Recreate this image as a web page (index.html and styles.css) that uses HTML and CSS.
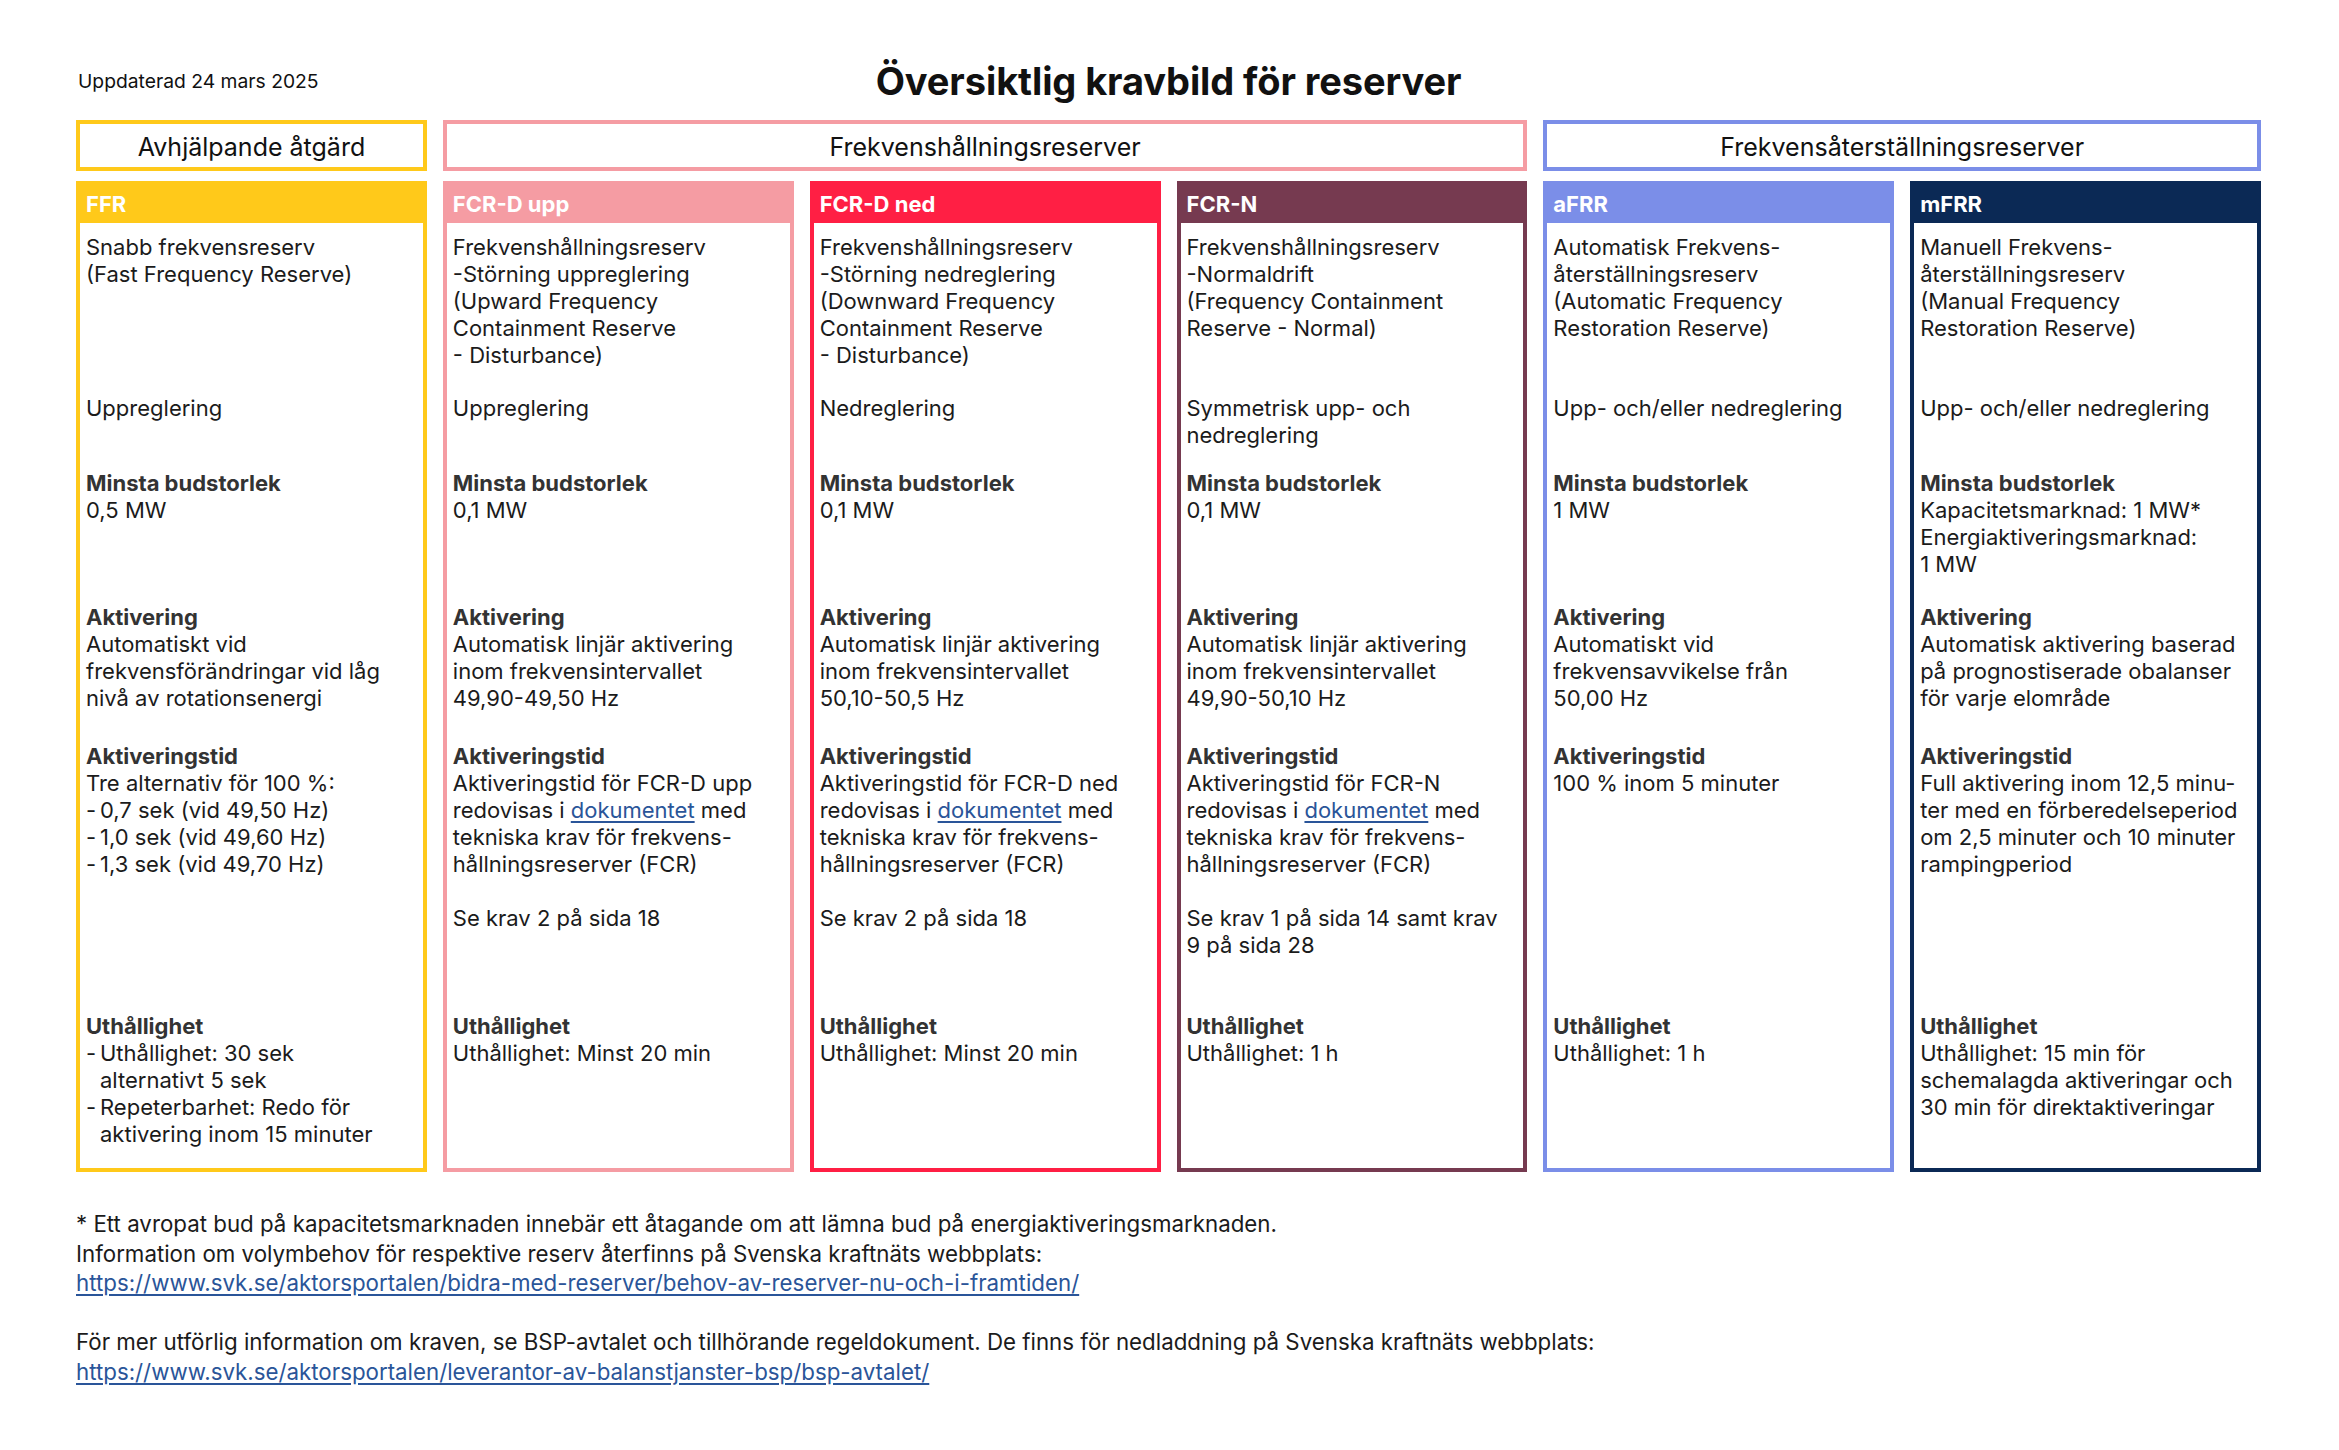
FILE: index.html
```html
<!DOCTYPE html>
<html lang="sv">
<head>
<meta charset="utf-8">
<title>Översiktlig kravbild för reserver</title>
<link rel="stylesheet" href="styles.css">
</head>
<body>
<div class="page">
  <header class="top">
    <div class="updated">Uppdaterad 24 mars 2025</div>
    <h1 class="title">Översiktlig kravbild för reserver</h1>
    <div></div>
  </header>

  <div class="groups">
    <div class="group g-yellow">Avhjälpande åtgärd</div>
    <div class="group g-pink span3">Frekvenshållningsreserver</div>
    <div class="group g-blue span2">Frekvensåterställningsreserver</div>
  </div>

  <div class="cols">
    <section class="col c-ffr">
      <div class="head">FFR</div>
      <div class="body">
        <div class="s desc">Snabb frekvensreserv<br>(Fast Frequency Reserve)</div>
        <div class="s dir">Uppreglering</div>
        <div class="s bud"><b>Minsta budstorlek</b><br>0,5 MW</div>
        <div class="s akt"><b>Aktivering</b><br>Automatiskt vid<br>frekvensförändringar vid låg<br>nivå av rotationsenergi</div>
        <div class="s tid"><b>Aktiveringstid</b><br>Tre alternativ för 100 %:
          <ul class="dash">
            <li>0,7 sek (vid 49,50 Hz)</li>
            <li>1,0 sek (vid 49,60 Hz)</li>
            <li>1,3 sek (vid 49,70 Hz)</li>
          </ul>
        </div>
        <div class="s uth"><b>Uthållighet</b>
          <ul class="dash">
            <li>Uthållighet: 30 sek<br>alternativt 5 sek</li>
            <li>Repeterbarhet: Redo för<br>aktivering inom 15 minuter</li>
          </ul>
        </div>
      </div>
    </section>

    <section class="col c-fcrdu">
      <div class="head">FCR-D upp</div>
      <div class="body">
        <div class="s desc">Frekvenshållningsreserv<br>-Störning uppreglering<br>(Upward Frequency<br>Containment Reserve<br>- Disturbance)</div>
        <div class="s dir">Uppreglering</div>
        <div class="s bud"><b>Minsta budstorlek</b><br>0,1 MW</div>
        <div class="s akt"><b>Aktivering</b><br>Automatisk linjär aktivering<br>inom frekvensintervallet<br>49,90-49,50 Hz</div>
        <div class="s tid"><b>Aktiveringstid</b><br>Aktiveringstid för FCR-D upp<br>redovisas i <a href="#">dokumentet</a> med<br>tekniska krav för frekvens-<br>hållningsreserver (FCR)<br><br>Se krav 2 på sida 18</div>
        <div class="s uth"><b>Uthållighet</b><br>Uthållighet: Minst 20 min</div>
      </div>
    </section>

    <section class="col c-fcrdn">
      <div class="head">FCR-D ned</div>
      <div class="body">
        <div class="s desc">Frekvenshållningsreserv<br>-Störning nedreglering<br>(Downward Frequency<br>Containment Reserve<br>- Disturbance)</div>
        <div class="s dir">Nedreglering</div>
        <div class="s bud"><b>Minsta budstorlek</b><br>0,1 MW</div>
        <div class="s akt"><b>Aktivering</b><br>Automatisk linjär aktivering<br>inom frekvensintervallet<br>50,10-50,5 Hz</div>
        <div class="s tid"><b>Aktiveringstid</b><br>Aktiveringstid för FCR-D ned<br>redovisas i <a href="#">dokumentet</a> med<br>tekniska krav för frekvens-<br>hållningsreserver (FCR)<br><br>Se krav 2 på sida 18</div>
        <div class="s uth"><b>Uthållighet</b><br>Uthållighet: Minst 20 min</div>
      </div>
    </section>

    <section class="col c-fcrn">
      <div class="head">FCR-N</div>
      <div class="body">
        <div class="s desc">Frekvenshållningsreserv<br>-Normaldrift<br>(Frequency Containment<br>Reserve - Normal)</div>
        <div class="s dir">Symmetrisk upp- och<br>nedreglering</div>
        <div class="s bud"><b>Minsta budstorlek</b><br>0,1 MW</div>
        <div class="s akt"><b>Aktivering</b><br>Automatisk linjär aktivering<br>inom frekvensintervallet<br>49,90-50,10 Hz</div>
        <div class="s tid"><b>Aktiveringstid</b><br>Aktiveringstid för FCR-N<br>redovisas i <a href="#">dokumentet</a> med<br>tekniska krav för frekvens-<br>hållningsreserver (FCR)<br><br>Se krav 1 på sida 14 samt krav<br>9 på sida 28</div>
        <div class="s uth"><b>Uthållighet</b><br>Uthållighet: 1 h</div>
      </div>
    </section>

    <section class="col c-afrr">
      <div class="head">aFRR</div>
      <div class="body">
        <div class="s desc">Automatisk Frekvens-<br>återställningsreserv<br>(Automatic Frequency<br>Restoration Reserve)</div>
        <div class="s dir">Upp- och/eller nedreglering</div>
        <div class="s bud"><b>Minsta budstorlek</b><br>1 MW</div>
        <div class="s akt"><b>Aktivering</b><br>Automatiskt vid<br>frekvensavvikelse från<br>50,00 Hz</div>
        <div class="s tid"><b>Aktiveringstid</b><br>100 % inom 5 minuter</div>
        <div class="s uth"><b>Uthållighet</b><br>Uthållighet: 1 h</div>
      </div>
    </section>

    <section class="col c-mfrr">
      <div class="head">mFRR</div>
      <div class="body">
        <div class="s desc">Manuell Frekvens-<br>återställningsreserv<br>(Manual Frequency<br>Restoration Reserve)</div>
        <div class="s dir">Upp- och/eller nedreglering</div>
        <div class="s bud"><b>Minsta budstorlek</b><br>Kapacitetsmarknad: 1 MW*<br>Energiaktiveringsmarknad:<br>1 MW</div>
        <div class="s akt"><b>Aktivering</b><br>Automatisk aktivering baserad<br>på prognostiserade obalanser<br>för varje elområde</div>
        <div class="s tid"><b>Aktiveringstid</b><br>Full aktivering inom 12,5 minu-<br>ter med en förberedelseperiod<br>om 2,5 minuter och 10 minuter<br>rampingperiod</div>
        <div class="s uth"><b>Uthållighet</b><br>Uthållighet: 15 min för<br>schemalagda aktiveringar och<br>30 min för direktaktiveringar</div>
      </div>
    </section>
  </div>

  <footer class="notes">
    <p>* Ett avropat bud på kapacitetsmarknaden innebär ett åtagande om att lämna bud på energiaktiveringsmarknaden.<br>
    Information om volymbehov för respektive reserv återfinns på Svenska kraftnäts webbplats:<br>
    <a href="#">https://www.svk.se/aktorsportalen/bidra-med-reserver/behov-av-reserver-nu-och-i-framtiden/</a></p>
    <p>För mer utförlig information om kraven, se BSP-avtalet och tillhörande regeldokument. De finns för nedladdning på Svenska kraftnäts webbplats:<br>
    <a href="#">https://www.svk.se/aktorsportalen/leverantor-av-balanstjanster-bsp/bsp-avtalet/</a></p>
  </footer>
</div>
</body>
</html>
```
FILE: styles.css
```css
* { box-sizing: border-box; }
html, body { margin: 0; padding: 0; background: #ffffff; }
body {
  font-family: "Inter", "Roboto", "Liberation Sans", sans-serif;
  color: #1b1b1b;
}
.page {
  width: 2339px;
  padding: 58px 78px 0 76px;
}
.top {
  display: grid;
  grid-template-columns: 1fr auto 1fr;
  align-items: center;
  height: 44px;
}
.updated {
  font-size: 19.3px;
  color: #111;
  padding-left: 2px;
}
.title {
  margin: 0;
  font-size: 38px;
  font-weight: 700;
  color: #111;
  letter-spacing: -0.1px;
}
.groups {
  display: grid;
  grid-template-columns: repeat(6, 1fr);
  column-gap: 16px;
  margin-top: 18px;
}
.group {
  height: 51px;
  border: 4px solid;
  display: flex;
  align-items: center;
  justify-content: center;
  padding-top: 2px;
  font-size: 25px;
  color: #111;
}
.span3 { grid-column: span 3; }
.span2 { grid-column: span 2; }
.g-yellow { border-color: #ffc91a; }
.g-pink { border-color: #f59ca3; }
.g-blue { border-color: #7b8ee8; }

.cols {
  display: grid;
  grid-template-columns: repeat(6, 1fr);
  column-gap: 16px;
  margin-top: 10px;
  height: 991px;
}
.col {
  border: 4px solid var(--c);
  border-top: 0;
  display: flex;
  flex-direction: column;
}
.head {
  background: var(--c);
  height: 42px;
  margin: 0 -4px;
  padding: 4px 10px 0 10px;
  display: flex;
  align-items: center;
  color: #ffffff;
  font-weight: 700;
  font-size: 22px;
}
.body {
  padding: 11px 6px 0 6px;
  font-size: 22px;
  line-height: 27px;
  white-space: nowrap;
}
.body b { font-weight: 700; color: #333; }
.s.desc { height: 161px; }
.s.dir { height: 75px; }
.s.bud { height: 134px; }
.s.akt { height: 139px; }
.s.tid { height: 270px; }
.dash { list-style: none; margin: 0; padding: 0; }
.dash li { position: relative; padding-left: 14px; }
.dash li::before { content: "-"; position: absolute; left: 0; }
a { color: #2a5599; text-decoration: underline; text-underline-offset: 3px; }

.c-ffr { --c: #ffc91a; }
.c-fcrdu { --c: #f59ca3; }
.c-fcrdn { --c: #ff1f44; }
.c-fcrn { --c: #763a50; }
.c-afrr { --c: #7b8ee8; }
.c-mfrr { --c: #0b2955; }

.notes {
  margin-top: 37px;
  font-size: 22.3px;
  line-height: 29.5px;
  color: #1b1b1b;
}
.notes p { margin: 0 0 29.5px 0; }
```
